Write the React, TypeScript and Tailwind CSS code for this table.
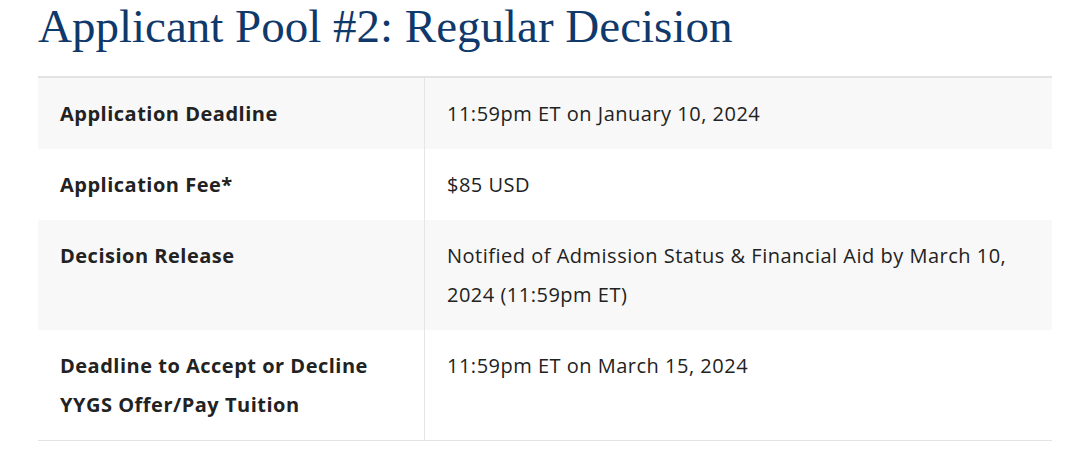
import React from "react";

const rows: { label: string; value: string; gray: boolean }[] = [
  { label: "Application Deadline", value: "11:59pm ET on January 10, 2024", gray: true },
  { label: "Application Fee*", value: "$85 USD", gray: false },
  {
    label: "Decision Release",
    value: "Notified of Admission Status & Financial Aid by March 10, 2024 (11:59pm ET)",
    gray: true,
  },
  {
    label: "Deadline to Accept or Decline YYGS Offer/Pay Tuition",
    value: "11:59pm ET on March 15, 2024",
    gray: false,
  },
];

export default function App() {
  return (
    <div className="w-[1080px] h-[455px] bg-white overflow-hidden">
      <div className="pl-[38px] pr-[28px]">
        <h1
          className="text-[#10396b] text-[47px] leading-[52px] m-0 font-normal"
          style={{ fontFamily: '"Liberation Serif", "DejaVu Serif", serif' }}
        >
          Applicant Pool #2: Regular Decision
        </h1>
        <div
          className="mt-[24px] border-t-2 border-b border-[#e3e3e3] text-[#222222] tracking-[0.5px]"
          style={{ fontFamily: '"Open Sans", "Noto Sans", sans-serif' }}
        >
          {rows.map((r, i) => (
            <div key={i} className={`grid grid-cols-[386px_1fr] ${r.gray ? "bg-[#f8f8f8]" : "bg-white"}`}>
              <div className="px-[22px] py-[16px] text-[20px] leading-[39px] font-bold">
                {r.label}
              </div>
              <div className="border-l border-[#e5e5e5] pl-[22px] pr-[16px] py-[16px] text-[20px] leading-[39px]">
                {r.value}
              </div>
            </div>
          ))}
        </div>
      </div>
    </div>
  );
}
